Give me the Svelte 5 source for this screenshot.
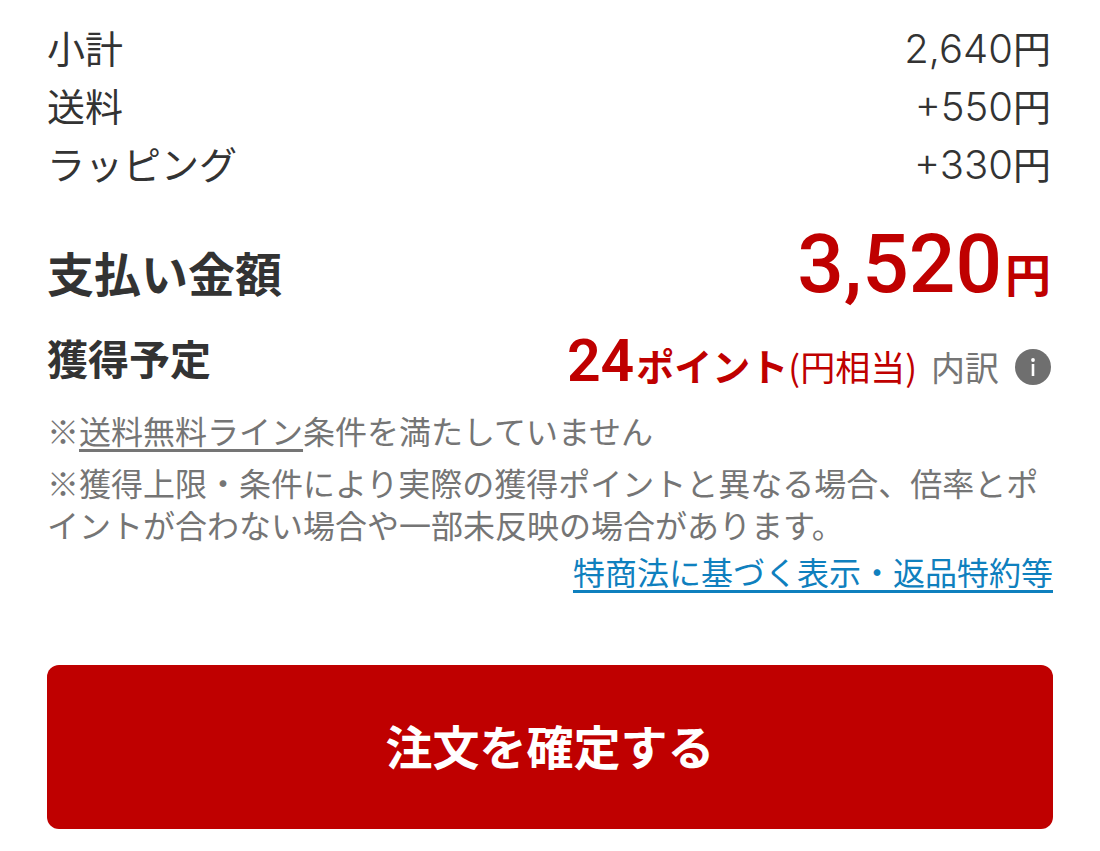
<script lang="ts">
	const rows = [
		{ label: '小計', value: '2,640' },
		{ label: '送料', value: '+550' },
		{ label: 'ラッピング', value: '+330' }
	];

	const total = '3,520';
	const points = 24;
</script>

<main class="summary">
	<dl class="rows">
		{#each rows as row (row.label)}
			<div class="row">
				<dt>{row.label}</dt>
				<dd><span class="num">{row.value}</span>円</dd>
			</div>
		{/each}
	</dl>

	<div class="total">
		<h2>支払い金額</h2>
		<p class="price"><strong>{total}</strong><span>円</span></p>
	</div>

	<div class="points">
		<h3>獲得予定</h3>
		<div class="points-value">
			<strong class="count">{points}</strong>
			<strong class="unit">ポイント</strong>
			<span class="rate">(円相当)</span>
			<button class="detail" type="button">
				内訳
				<svg viewBox="0 0 36 36" aria-hidden="true">
					<circle cx="18" cy="18" r="18" fill="#6f6f6f" />
					<circle cx="18" cy="11" r="1.9" fill="#fff" />
					<path d="M18 15V27" fill="none" stroke="#fff" stroke-width="2.6" />
				</svg>
			</button>
		</div>
	</div>

	<p class="note first">※<a href="#shipping">送料無料ライン</a>条件を満たしていません</p>
	<p class="note">
		※獲得上限・条件により実際の獲得ポイントと異なる場合、倍率とポイントが合わない場合や一部未反映の場合があります。
	</p>
	<p class="legal"><a href="#legal">特商法に基づく表示・返品特約等</a></p>

	<button class="submit" type="button">注文を確定する</button>
</main>

<style>
	:global(body) {
		margin: 0;
		background: #fff;
	}

	.summary {
		box-sizing: border-box;
		padding: 18px 47px 22px;
		font-family: 'Noto Sans CJK JP', sans-serif;
		color: #333;
	}

	dl,
	dd,
	p,
	h2,
	h3 {
		margin: 0;
	}

	.row {
		display: flex;
		justify-content: space-between;
		padding-right: 2px;
		font-size: 38px;
		line-height: 58px;
	}

	.num {
		font-family: Inter, sans-serif;
		font-size: 40px;
		font-weight: 300;
		line-height: 1;
	}

	.total {
		display: flex;
		justify-content: space-between;
		align-items: baseline;
		margin-top: 26px;
		padding-right: 2px;
		line-height: 92px;
	}

	.total h2 {
		font-size: 47px;
		font-weight: 700;
	}

	.price {
		color: #bf0000;
	}

	.price strong {
		margin-right: 3px;
		font-family: Roboto, sans-serif;
		font-size: 82px;
		font-weight: 500;
	}

	.price span {
		font-size: 46px;
		font-weight: 700;
	}

	.points {
		display: flex;
		justify-content: space-between;
		align-items: flex-start;
		padding: 0 2px 12px 0;
		line-height: 60px;
	}

	.points h3 {
		font-size: 41px;
		font-weight: 700;
		line-height: 52px;
	}

	.points-value {
		display: flex;
		align-items: baseline;
		color: #bf0000;
	}

	.count {
		margin-right: 2px;
		font-family: Roboto, sans-serif;
		font-size: 59px;
		font-weight: 600;
	}

	.unit {
		font-size: 38px;
		font-weight: 700;
	}

	.rate {
		font-size: 35px;
	}

	.detail {
		display: flex;
		align-items: center;
		gap: 16px;
		margin-left: 14px;
		padding: 0;
		border: 0;
		background: none;
		color: #757575;
		font: inherit;
		font-size: 34px;
		cursor: pointer;
	}

	.detail svg {
		width: 36px;
		height: 36px;
	}

	.note {
		color: #757575;
		font-size: 32px;
		line-height: 42px;
	}

	.first {
		margin-bottom: 10px;
	}

	.note a {
		color: inherit;
		text-underline-offset: 5px;
	}

	.legal {
		font-size: 32px;
		line-height: 52px;
		text-align: right;
	}

	.legal a {
		color: #0f80be;
		text-underline-offset: 5px;
	}

	.submit {
		display: block;
		width: 100%;
		margin-top: 68px;
		padding: 45px 20px 49px;
		border: 0;
		border-radius: 12px;
		background: #bf0000;
		color: #fff;
		font: inherit;
		font-size: 47px;
		font-weight: 700;
		line-height: 70px;
		cursor: pointer;
	}
</style>
